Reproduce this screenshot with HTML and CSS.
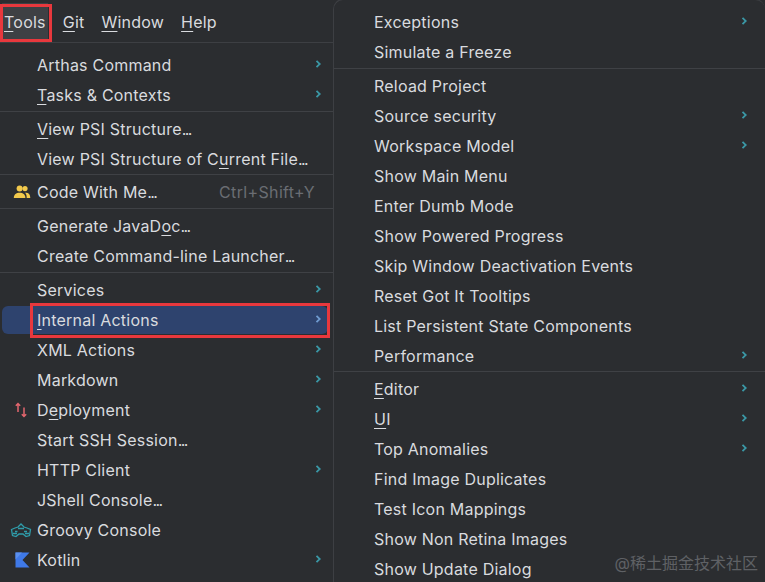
FILE: index.html
```html
<!DOCTYPE html>
<html lang="en">
<head>
<meta charset="utf-8">
<title>Tools menu</title>
<link rel="stylesheet" href="styles.css">
</head>
<body>
<div class="screen">
  <aside class="main">
    <nav class="menubar">
      <span class="top active"><u>T</u>ools</span>
      <span class="top"><u>G</u>it</span>
      <span class="top"><u>W</u>indow</span>
      <span class="top"><u>H</u>elp</span>
    </nav>
    <ul class="menu first">
      <li class="item"><span class="label">Arthas Command</span><svg class="chev" viewBox="0 0 6 10"><path d="M1.500 1.800 4.800 5 1.500 8.200"/></svg></li>
      <li class="item"><span class="label"><u>T</u>asks &amp; Contexts</span><svg class="chev" viewBox="0 0 6 10"><path d="M1.500 1.800 4.800 5 1.500 8.200"/></svg></li>
      <li class="sep"></li>
      <li class="item"><span class="label"><u>V</u>iew PSI Structure<span class="dots">...</span></span></li>
      <li class="item"><span class="label">View PSI Structure of C<u>u</u>rrent File<span class="dots">...</span></span></li>
      <li class="sep sep-tight"></li>
      <li class="item">
        <svg class="icon icon-people" viewBox="0 0 18 14"><circle cx="6.600" cy="3.600" r="3"/><circle cx="12" cy="3.600" r="2.600"/><path d="M0.800 13c0-3.400 2.400-5.200 5.800-5.200s5.800 1.800 5.800 5.200z"/><path d="M13 7.700c2.700 0 4.300 1.900 4.300 5.300h-3.600c0-2.100-.3-3.800-1.700-5.200z"/></svg>
        <span class="label">Code With Me<span class="dots">...</span></span><span class="shortcut">Ctrl+Shift+Y</span>
      </li>
      <li class="sep"></li>
      <li class="item"><span class="label">Generate JavaD<u>o</u>c<span class="dots">...</span></span></li>
      <li class="item"><span class="label">Create Command-line Launcher<span class="dots">...</span></span></li>
      <li class="sep"></li>
      <li class="item"><span class="label">Services</span><svg class="chev" viewBox="0 0 6 10"><path d="M1.500 1.800 4.800 5 1.500 8.200"/></svg></li>
      <li class="item selected"><span class="label"><u>I</u>nternal Actions</span><svg class="chev" viewBox="0 0 6 10"><path d="M1.500 1.800 4.800 5 1.500 8.200"/></svg></li>
      <li class="item"><span class="label">XML Actions</span><svg class="chev" viewBox="0 0 6 10"><path d="M1.500 1.800 4.800 5 1.500 8.200"/></svg></li>
      <li class="item"><span class="label">Markdown</span><svg class="chev" viewBox="0 0 6 10"><path d="M1.500 1.800 4.800 5 1.500 8.200"/></svg></li>
      <li class="item">
        <svg class="icon icon-deploy" viewBox="0 0 14 16"><path class="arrows" d="M4 10V1.500M1.800 3.700 4 1.500l2.200 2.200"/><path class="arrows" d="M10 5.500V14.500M7.800 12.300 10 14.500l2.200-2.200"/></svg>
        <span class="label">D<u>e</u>ployment</span><svg class="chev" viewBox="0 0 6 10"><path d="M1.500 1.800 4.800 5 1.500 8.200"/></svg>
      </li>
      <li class="item"><span class="label">Start SSH Session<span class="dots">...</span></span></li>
      <li class="item"><span class="label">HTTP Client</span><svg class="chev" viewBox="0 0 6 10"><path d="M1.500 1.800 4.800 5 1.500 8.200"/></svg></li>
      <li class="item"><span class="label">JShell Console<span class="dots">...</span></span></li>
      <li class="item">
        <svg class="icon icon-wide" viewBox="0 0 22 16"><path class="groovy" d="M1.500 7.500 5 6l3-1 3-3 3 3 3 1 3.500 1.500-1 6-3.500 1-3-2.500H9L6 14.500l-3.500-1zM5 9.500h2.500M14 9.500h3M8 6.500h6M3 11.500h4M15 11.500h4"/></svg>
        <span class="label">Groovy Console</span>
      </li>
      <li class="item">
        <svg class="icon icon-kotlin" viewBox="0 0 15 16"><path fill="#3f79e8" d="M0.500 0.500h14L7.500 8l7 7.500H0.500z"/><path fill="#5a8fee" d="M0.500 0.500h6.500L0.500 7.500z"/></svg>
        <span class="label">Kotlin</span><svg class="chev" viewBox="0 0 6 10"><path d="M1.500 1.800 4.800 5 1.500 8.200"/></svg>
      </li>
      <li class="item">
        <svg class="icon icon-cut" viewBox="0 0 14 14"><circle cx="7" cy="7" r="6"/></svg>
      </li>
    </ul>
  </aside>
  <section class="popup">
    <ul class="menu">
      <li class="item"><span class="label">Exceptions</span><svg class="chev" viewBox="0 0 6 10"><path d="M1.500 1.800 4.800 5 1.500 8.200"/></svg></li>
      <li class="item"><span class="label">Simulate a Freeze</span></li>
      <li class="sep"></li>
      <li class="item"><span class="label">Reload Project</span></li>
      <li class="item"><span class="label">Source security</span><svg class="chev" viewBox="0 0 6 10"><path d="M1.500 1.800 4.800 5 1.500 8.200"/></svg></li>
      <li class="item"><span class="label">Workspace Model</span><svg class="chev" viewBox="0 0 6 10"><path d="M1.500 1.800 4.800 5 1.500 8.200"/></svg></li>
      <li class="item"><span class="label">Show Main Menu</span></li>
      <li class="item"><span class="label">Enter Dumb Mode</span></li>
      <li class="item"><span class="label">Show Powered Progress</span></li>
      <li class="item"><span class="label">Skip Window Deactivation Events</span></li>
      <li class="item"><span class="label">Reset Got It Tooltips</span></li>
      <li class="item"><span class="label">List Persistent State Components</span></li>
      <li class="item"><span class="label">Performance</span><svg class="chev" viewBox="0 0 6 10"><path d="M1.500 1.800 4.800 5 1.500 8.200"/></svg></li>
      <li class="sep sep-tight"></li>
      <li class="item"><span class="label"><u>E</u>ditor</span><svg class="chev" viewBox="0 0 6 10"><path d="M1.500 1.800 4.800 5 1.500 8.200"/></svg></li>
      <li class="item"><span class="label"><u>U</u>I</span><svg class="chev" viewBox="0 0 6 10"><path d="M1.500 1.800 4.800 5 1.500 8.200"/></svg></li>
      <li class="item"><span class="label">Top Anomalies</span><svg class="chev" viewBox="0 0 6 10"><path d="M1.500 1.800 4.800 5 1.500 8.200"/></svg></li>
      <li class="item"><span class="label">Find Image Duplicates</span></li>
      <li class="item"><span class="label">Test Icon Mappings</span></li>
      <li class="item"><span class="label">Show Non Retina Images</span></li>
      <li class="item"><span class="label">Show Update Dialog</span></li>
    </ul>
  </section>
  <div class="mark mark-tools"></div>
  <div class="mark mark-actions"></div>
  <div class="watermark">@稀土掘金技术社区</div>
</div>
</body>
</html>
```

FILE: styles.css
```css
* { box-sizing: border-box; }
html, body { margin: 0; padding: 0; }
body { background: #2b2d30; }
.screen {
  position: relative;
  display: flex;
  width: 765px;
  height: 582px;
  overflow: hidden;
  background: #2b2d30;
  color: #d9dbdf;
  font-family: Inter, "Noto Sans CJK SC", sans-serif;
  font-size: 16px;
  letter-spacing: 0.22px;
}
.main { width: 333px; flex: none; }
.menubar {
  display: flex;
  align-items: center;
  height: 43px;
  padding: 3px 0 0 2px;
  border-bottom: 1px solid #3d3f43;
}
.top { height: 39px; line-height: 39px; padding: 0 2px; margin-right: 13px; }
.top.active { background: #3e4044; }
u { text-decoration-thickness: 1px; text-underline-offset: 3px; }
.dots { letter-spacing: -1.6px; }
.menu { list-style: none; margin: 0; padding: 7px 0 0; }
.item {
  position: relative;
  display: flex;
  align-items: center;
  height: 30px;
  padding: 0 12px 0 37px;
}
.label { flex: 1; white-space: nowrap; }
.shortcut { color: #6a6d73; margin-right: 6px; letter-spacing: 0.35px; }
.chev { width: 6px; height: 10px; flex: none; margin-bottom: 2px; }
.chev path { fill: none; stroke: #3a98a6; stroke-width: 1.800; }
.icon { position: absolute; left: 12px; top: 7px; width: 18px; height: 16px; fill: #f2c94c; }
.icon-people { left: 13px; top: 8px; height: 14px; }
.icon-deploy { left: 14px; top: 7px; width: 14px; }
.icon-wide { left: 10px; width: 22px; }
.icon-kotlin { left: 15px; width: 15px; }
.icon-cut { left: 13px; top: 6px; fill: #8c8f94; width: 14px; height: 14px; }
.arrows { fill: none; stroke: #e2666e; stroke-width: 1.500; }
.groovy { fill: none; stroke: #2f9dab; stroke-width: 1.300; }
.sep { height: 4px; padding-top: 1px; }
.sep::before { content: ""; display: block; height: 1px; background: #3f4145; }
.sep-tight { height: 3px; padding-top: 0; }
.selected { background: #2e436e; margin: 1px 5px 1px 2px; padding: 0 7px 0 35px; border-radius: 6px; height: 28px; }
.selected .chev path { stroke: #6f9bd0; }
.popup {
  flex: 1;
  margin-top: -1px;
  border-top: 1px solid #3d3f43;
  border-left: 1px solid #3d3f43;
  border-top-left-radius: 10px;
  border-top-right-radius: 10px;
  background: #2b2d30;
}
.popup .menu { padding-top: 7px; }
.popup .item { padding: 0 18px 0 40px; }
.mark { position: absolute; border: 3px solid #e8383d; }
.mark-tools { left: 0; top: 4px; width: 52px; height: 38px; }
.mark-actions { left: 30px; top: 303px; width: 300px; height: 35px; }
.watermark {
  position: absolute;
  right: 7px;
  bottom: 8px;
  color: #5f6165;
  font-size: 16px;
  letter-spacing: 0;
}
```
